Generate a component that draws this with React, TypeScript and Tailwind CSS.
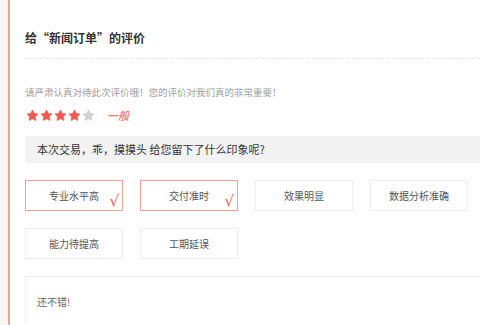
import { Star } from 'lucide-react'

const TAGS = [
  { label: '专业水平高', on: true },
  { label: '交付准时', on: true },
  { label: '效果明显', on: false },
  { label: '数据分析准确', on: false },
  { label: '能力待提高', on: false },
  { label: '工期延误', on: false },
]

export default function App() {
  return (
    <div
      className="w-[480px] h-[325px] overflow-hidden flex bg-white"
      style={{ fontFamily: '"Noto Sans CJK SC", "Liberation Sans", sans-serif' }}
    >
      <div className="w-[8px] shrink-0 bg-[#f6f6f6]" />
      <div className="w-[2px] shrink-0 bg-[#f49e98]" />
      <div className="flex-1 pl-[15px] min-w-0">
        {/* Title */}
        <div className="pt-[29px] pb-[12px] border-b border-dashed border-[#e6e6e6]">
          <h2 className="text-[12px] leading-[17px] font-bold text-[#333]">给“新闻订单”的评价</h2>
        </div>

        <p className="mt-[26px] text-[9.5px] leading-[14px] text-[#a0a0a0]">
          请严肃认真对待此次评价哦！您的评价对我们真的非常重要！
        </p>

        {/* Stars */}
        <div className="mt-[8px] flex items-center h-[16px]">
          <div className="flex gap-[1px] pl-[1px]">
            {[0, 1, 2, 3, 4].map(i => (
              <Star
                key={i}
                size={13}
                strokeWidth={1}
                className={i < 4 ? 'fill-[#f05a4e] text-[#f05a4e]' : 'fill-[#cfcfcf] text-[#cfcfcf]'}
              />
            ))}
          </div>
          <span className="ml-[12px] text-[11px] italic text-[#f05a4e]">一般</span>
        </div>

        {/* Question bar */}
        <div className="mt-[13px] h-[27px] bg-[#f3f3f3] flex items-center pl-[12px]">
          <span className="text-[11px] text-[#333]">本次交易，乖，摸摸头 给您留下了什么印象呢?</span>
        </div>

        {/* Tags */}
        <div className="mt-[17px] grid grid-cols-[98px_98px_98px_98px] gap-x-[17px] gap-y-[17px]">
          {TAGS.map(t => (
            <div
              key={t.label}
              className={
                'relative h-[31px] flex items-center justify-center text-[10px] text-[#555] border ' +
                (t.on ? 'border-[#f49e98]' : 'border-[#eeeeee]')
              }
            >
              {t.label}
              {t.on && (
                <span
                  className="absolute right-[3px] bottom-[1px] text-[15px] leading-none text-[#f05a4e]"
                  style={{ fontFamily: '"DejaVu Sans", sans-serif' }}
                >
                  √
                </span>
              )}
            </div>
          ))}
        </div>

        {/* Textarea */}
        <div className="mt-[17px] h-[60px] border border-[#eeeeee] border-r-0 pl-[11px] pt-[10px]">
          <span className="text-[10px] text-[#666]">还不错!</span>
        </div>
      </div>
    </div>
  )
}
